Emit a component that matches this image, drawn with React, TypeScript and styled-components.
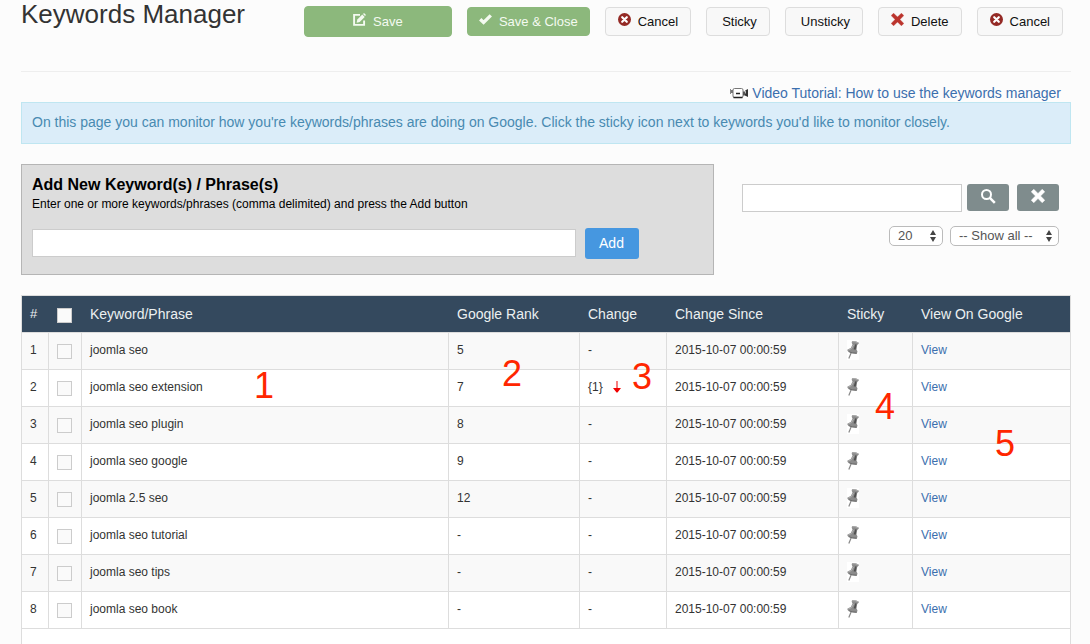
import React from "react";
import styled, { createGlobalStyle, css } from "styled-components";

const GlobalStyle = createGlobalStyle`
  * { box-sizing: border-box; }
  body {
    margin: 0;
    background: #fcfcfc;
    color: #333;
    font-family: "Liberation Sans", Arial, sans-serif;
    font-size: 12px;
    line-height: 18px;
  }
  button, input, select { font-family: inherit; }
`;

const Page = styled.main`
  height: 100vh;
  overflow: hidden;
  padding: 0 19px 0 21px;
`;

const Header = styled.header`
  display: flex;
  justify-content: space-between;
  align-items: flex-start;
  height: 72px;
  padding-right: 8px;
  border-bottom: 1px solid #eee;
`;

const Title = styled.h1`
  margin: 0;
  font-size: 26px;
  font-weight: 400;
  line-height: 28px;
  white-space: nowrap;
`;

const Toolbar = styled.div`
  display: flex;
  align-items: center;
  gap: 15px;
  padding-top: 6px;
`;

const ToolButton = styled.button<{ $tone?: "success"; $wide?: boolean; $bare?: boolean }>`
  display: flex;
  align-items: center;
  justify-content: center;
  gap: 7px;
  height: 29px;
  padding: ${(p) => (p.$bare ? "0 12px 0 15px" : "0 12px")};
  border: 1px solid #ddd;
  border-radius: 4px;
  background: #f8f8f8;
  color: #111;
  font-size: 13px;
  line-height: 18px;
  white-space: nowrap;
  svg { margin-bottom: 4px; flex: none; }
  ${(p) =>
    p.$tone === "success" &&
    css`
      padding: 0 11px;
      border-color: #8cb87c;
      background: #8cb87c;
      color: #f4faf1;
    `}
  ${(p) =>
    p.$wide &&
    css`
      width: 148px;
      height: 31px;
    `}
`;

const TutorialRow = styled.div`
  display: flex;
  justify-content: flex-end;
  padding: 12px 10px 0 0;
`;

const TutorialLink = styled.a`
  display: flex;
  align-items: center;
  gap: 4px;
  color: #3b6fae;
  font-size: 14px;
  line-height: 18px;
  text-decoration: none;
`;

const Notice = styled.p`
  margin: 0;
  padding: 9px 10px 11px;
  border: 1px solid #bfe6f1;
  background: #dbedf9;
  color: #488ab1;
  font-size: 14px;
  line-height: 20px;
`;

const Controls = styled.section`
  display: flex;
  justify-content: space-between;
  margin: 20px 0;
`;

const AddPanel = styled.form`
  width: 66%;
  padding: 10px 10px 15px;
  border: 1px solid #b5b5b5;
  background: #ddd;
  color: #000;
`;

const PanelTitle = styled.h2`
  margin: 0;
  font-size: 16px;
  line-height: 20px;
`;

const PanelText = styled.label`
  display: block;
  margin-bottom: 15px;
`;

const AddRow = styled.div`
  display: flex;
  align-items: flex-start;
  gap: 9px;
`;

const TextInput = styled.input`
  height: 28px;
  padding: 4px 6px;
  border: 1px solid #ccc;
  background: #fff;
  font-size: 13px;
`;

const KeywordInput = styled(TextInput)`
  width: 81%;
  margin: 1px 0 0;
`;

const SearchInput = styled(TextInput)`
  width: 220px;
`;

const AddButton = styled.button`
  width: 54px;
  height: 31px;
  padding: 0 0 2px;
  border: 0;
  border-radius: 3px;
  background: #4697e0;
  color: #fff;
  font-size: 14px;
`;

const Filters = styled.div`
  padding: 20px 12px 0 0;
`;

const SearchRow = styled.form`
  display: flex;
  align-items: flex-start;
`;

const IconButton = styled.button`
  display: flex;
  justify-content: center;
  width: 42px;
  height: 27px;
  margin-left: 5px;
  padding: 5px 0 0;
  border: 0;
  border-radius: 3px;
  background: #7f8c8d;
  color: #fff;
  & + & { margin-left: 8px; }
`;

const SelectRow = styled.div`
  display: flex;
  justify-content: flex-end;
  gap: 7px;
  margin-top: 14px;
`;

const SelectBox = styled.span<{ $width: number }>`
  display: grid;
  align-items: center;
  width: ${(p) => p.$width}px;
  select, svg { grid-area: 1 / 1; }
  svg { justify-self: end; margin-right: 7px; pointer-events: none; }
`;

const Select = styled.select`
  appearance: none;
  width: 100%;
  height: 20px;
  padding: 0 0 2px 8px;
  border: 1px solid #bbb;
  border-radius: 5px;
  background: #fff;
  color: #555;
  font-size: 13px;
`;

const TableArea = styled.section`
  position: relative;
`;

const Table = styled.table`
  width: 100%;
  table-layout: fixed;
  border-spacing: 0;
  border: 1px solid #ddd;
  border-width: 1px 0 0 1px;
  background: #fff;
`;

const HeadCell = styled.th`
  height: 37px;
  padding: 8px;
  border-bottom: 1px solid #ddd;
  background: #34495e;
  color: #ecf0f1;
  font-size: 14px;
  font-weight: 400;
  line-height: 20px;
  text-align: left;
  vertical-align: top;
  white-space: nowrap;
  &:first-child { font-size: 13px; }
  &:last-child { border-right: 1px solid #ddd; }
`;

const Cell = styled.td`
  height: 37px;
  padding: 8px;
  border: 1px solid #ddd;
  border-width: 0 1px 1px 0;
  vertical-align: top;
  white-space: nowrap;
  a { color: #3b6fae; text-decoration: none; }
  svg { display: block; }
`;

const PinCell = styled(Cell)`
  padding: 7px 8px;
`;

const Row = styled.tr`
  &:nth-child(odd) { background: #f9f9f9; }
`;

const ChangeValue = styled.span`
  display: flex;
  align-items: center;
  gap: 10px;
`;

const Check = styled.input`
  appearance: none;
  display: block;
  width: 15px;
  height: 15px;
  margin: 3px 0 0;
  border: 1px solid #ccc;
  background: #fafafa;
  ${HeadCell} & { margin-top: 4px; }
`;

const Marker = styled.span<{ $top: number; $left?: number; $right?: number }>`
  position: absolute;
  top: ${(p) => p.$top}px;
  ${(p) => (p.$left !== undefined ? `left: ${p.$left}px;` : `right: ${p.$right}px;`)}
  color: #ff2600;
  font-size: 36px;
  line-height: 36px;
`;

const EditIcon = () => (
  <svg width="13" height="13" viewBox="0 0 13 13" fill="none" stroke="currentColor">
    <path d="M7 1.9H1.1v10h10V7.5" strokeWidth="1.9" />
    <path d="M3.6 9.7l.7-3.2 5-5 2.4 2.4-5 5z" fill="currentColor" stroke="none" />
    <path d="M10 1l1-1 2 2-1 1z" fill="currentColor" stroke="none" />
  </svg>
);

const CheckIcon = () => (
  <svg width="13" height="11" viewBox="0 0 13 11">
    <path d="M1.2 5.2l3.4 3.3L11.8 1.4" fill="none" stroke="currentColor" strokeWidth="3.3" />
  </svg>
);

const CancelIcon = () => (
  <svg width="13" height="13" viewBox="0 0 13 13">
    <circle cx="6.5" cy="6.5" r="6.5" fill="#942a25" />
    <path d="M4.2 4.2l4.6 4.6M8.8 4.2l-4.6 4.6" stroke="#fff" strokeWidth="2.2" strokeLinecap="round" />
  </svg>
);

const CrossIcon = ({ size, color }: { size: number; color: string }) => (
  <svg width={size} height={size} viewBox="0 0 13 13">
    <path
      d="M2.6.2L6.5 4.1 10.4.2 12.8 2.6 8.9 6.5l3.9 3.9-2.4 2.4-3.9-3.9-3.9 3.9L.2 10.4l3.9-3.9L.2 2.6z"
      fill={color}
      stroke={color}
      strokeWidth=".4"
      strokeLinejoin="round"
    />
  </svg>
);

const SearchIcon = () => (
  <svg width="15" height="15" viewBox="0 0 15 15" fill="none" stroke="currentColor">
    <circle cx="5.5" cy="5.5" r="4.5" strokeWidth="2" />
    <path d="M8.6 8.6l5.2 5.2" strokeWidth="2.5" />
  </svg>
);

const CameraIcon = () => (
  <svg width="18" height="12" viewBox="0 0 18 12">
    <path d="M.5 2v5" stroke="#888" />
    <path d="M1 3h2.5v3H1z" fill="#777" />
    <rect x="3" y="1.5" width="10" height="9" rx="1.5" fill="#fff" stroke="#777" />
    <path d="M3.5 10.5h9" stroke="#222" strokeWidth="1.5" />
    <path d="M6 6.5h4" stroke="#222" strokeWidth="1.5" />
    <path d="M13 4.5h2.5v4H13z" fill="#555" />
    <path d="M15 3.5L18 2v8l-3-1.500z" fill="#333" />
    <path d="M15.5 3.5v3" stroke="#bbb" />
  </svg>
);

const UpDownIcon = () => (
  <svg width="6" height="12" viewBox="0 0 6 12" fill="#444">
    <path d="M3 0l3 5H0zM3 12L0 7h6z" />
  </svg>
);

const DownIcon = () => (
  <svg width="8" height="12" viewBox="0 0 8 12" fill="#f00000">
    <path d="M3.5 0h1v7H8L4.5 11.5h-1L0 7h3.500z" />
  </svg>
);

const PinIcon = () => (
  <svg width="12" height="20" viewBox="0 0 12 20">
    <path fill="#fff" d="M0 0h12v20H0z" />
    <path d="M4.3 12.5L1.8 18.5" stroke="#888" strokeWidth="1.2" />
    <path d="M5 1.2Q8 .3 11.7 2.5v1.3l-1.500 1.100-.7 4.900 1 1.500-.6 2.400Q5 14 .5 11V9.600l3.300-1.700L5.500 4.400 4.700 2.800z" fill="#8c8c8c" />
    <path d="M5.2 1.8Q8 1 11 2.8M1.2 9.9l3.300-1.300L6.500 4.900" fill="none" stroke="#b0b0b0" />
    <path d="M9.6 4.6L8.6 9.8 6.6 9.3 8.3 4.3z" fill="#505050" />
    <path d="M1.5 11.600Q5 13.500 9.600 13.200" fill="none" stroke="#666" />
  </svg>
);

const columns = [27, 33, undefined, 131, 87, 172, 74, 158];

const rows = [
  { phrase: "joomla seo", rank: "5" },
  { phrase: "joomla seo extension", rank: "7", change: "{1}" },
  { phrase: "joomla seo plugin", rank: "8" },
  { phrase: "joomla seo google", rank: "9" },
  { phrase: "joomla 2.5 seo", rank: "12" },
  { phrase: "joomla seo tutorial", rank: "-" },
  { phrase: "joomla seo tips", rank: "-" },
  { phrase: "joomla seo book", rank: "-" },
];

export default function App() {
  return (
    <>
      <GlobalStyle />
      <Page>
        <Header>
          <Title>Keywords Manager</Title>
          <Toolbar>
            <ToolButton $tone="success" $wide><EditIcon />Save</ToolButton>
            <ToolButton $tone="success"><CheckIcon />Save &amp; Close</ToolButton>
            <ToolButton><CancelIcon />Cancel</ToolButton>
            <ToolButton $bare>Sticky</ToolButton>
            <ToolButton $bare>Unsticky</ToolButton>
            <ToolButton><CrossIcon size={13} color="#bb342d" />Delete</ToolButton>
            <ToolButton><CancelIcon />Cancel</ToolButton>
          </Toolbar>
        </Header>

        <TutorialRow>
          <TutorialLink href="#tutorial">
            <CameraIcon />
            Video Tutorial: How to use the keywords manager
          </TutorialLink>
        </TutorialRow>
        <Notice>
          On this page you can monitor how you're keywords/phrases are doing on Google. Click the
          sticky icon next to keywords you'd like to monitor closely.
        </Notice>

        <Controls>
          <AddPanel onSubmit={(e) => e.preventDefault()}>
            <PanelTitle>Add New Keyword(s) / Phrase(s)</PanelTitle>
            <PanelText htmlFor="keywords">
              Enter one or more keywords/phrases (comma delimited) and press the Add button
            </PanelText>
            <AddRow>
              <KeywordInput id="keywords" type="text" />
              <AddButton>Add</AddButton>
            </AddRow>
          </AddPanel>
          <Filters>
            <SearchRow onSubmit={(e) => e.preventDefault()}>
              <SearchInput type="text" aria-label="Search keywords" />
              <IconButton aria-label="Search"><SearchIcon /></IconButton>
              <IconButton type="reset" aria-label="Clear"><CrossIcon size={14} color="#fff" /></IconButton>
            </SearchRow>
            <SelectRow>
              <SelectBox $width={54}>
                <Select aria-label="Rows per page"><option>20</option></Select>
                <UpDownIcon />
              </SelectBox>
              <SelectBox $width={109}>
                <Select aria-label="Filter"><option>-- Show all --</option></Select>
                <UpDownIcon />
              </SelectBox>
            </SelectRow>
          </Filters>
        </Controls>

        <TableArea>
          <Table>
            <colgroup>
              {columns.map((width, i) => <col key={i} width={width} />)}
            </colgroup>
            <thead>
              <tr>
                <HeadCell>#</HeadCell>
                <HeadCell><Check type="checkbox" aria-label="Select all" /></HeadCell>
                <HeadCell>Keyword/Phrase</HeadCell>
                <HeadCell>Google Rank</HeadCell>
                <HeadCell>Change</HeadCell>
                <HeadCell>Change Since</HeadCell>
                <HeadCell>Sticky</HeadCell>
                <HeadCell>View On Google</HeadCell>
              </tr>
            </thead>
            <tbody>
              {rows.map((row, i) => (
                <Row key={row.phrase}>
                  <Cell>{i + 1}</Cell>
                  <Cell><Check type="checkbox" aria-label={`Select ${row.phrase}`} /></Cell>
                  <Cell>{row.phrase}</Cell>
                  <Cell>{row.rank}</Cell>
                  <Cell>
                    {row.change ? <ChangeValue>{row.change}<DownIcon /></ChangeValue> : "-"}
                  </Cell>
                  <Cell>2015-10-07 00:00:59</Cell>
                  <PinCell><PinIcon /></PinCell>
                  <Cell><a href="#view">View</a></Cell>
                </Row>
              ))}
            </tbody>
            <tfoot>
              <tr><Cell colSpan={8} /></tr>
            </tfoot>
          </Table>
          <Marker $top={73} $left={233}>1</Marker>
          <Marker $top={61} $right={549}>2</Marker>
          <Marker $top={64} $right={419}>3</Marker>
          <Marker $top={94} $right={176}>4</Marker>
          <Marker $top={131} $right={56}>5</Marker>
        </TableArea>
      </Page>
    </>
  );
}
